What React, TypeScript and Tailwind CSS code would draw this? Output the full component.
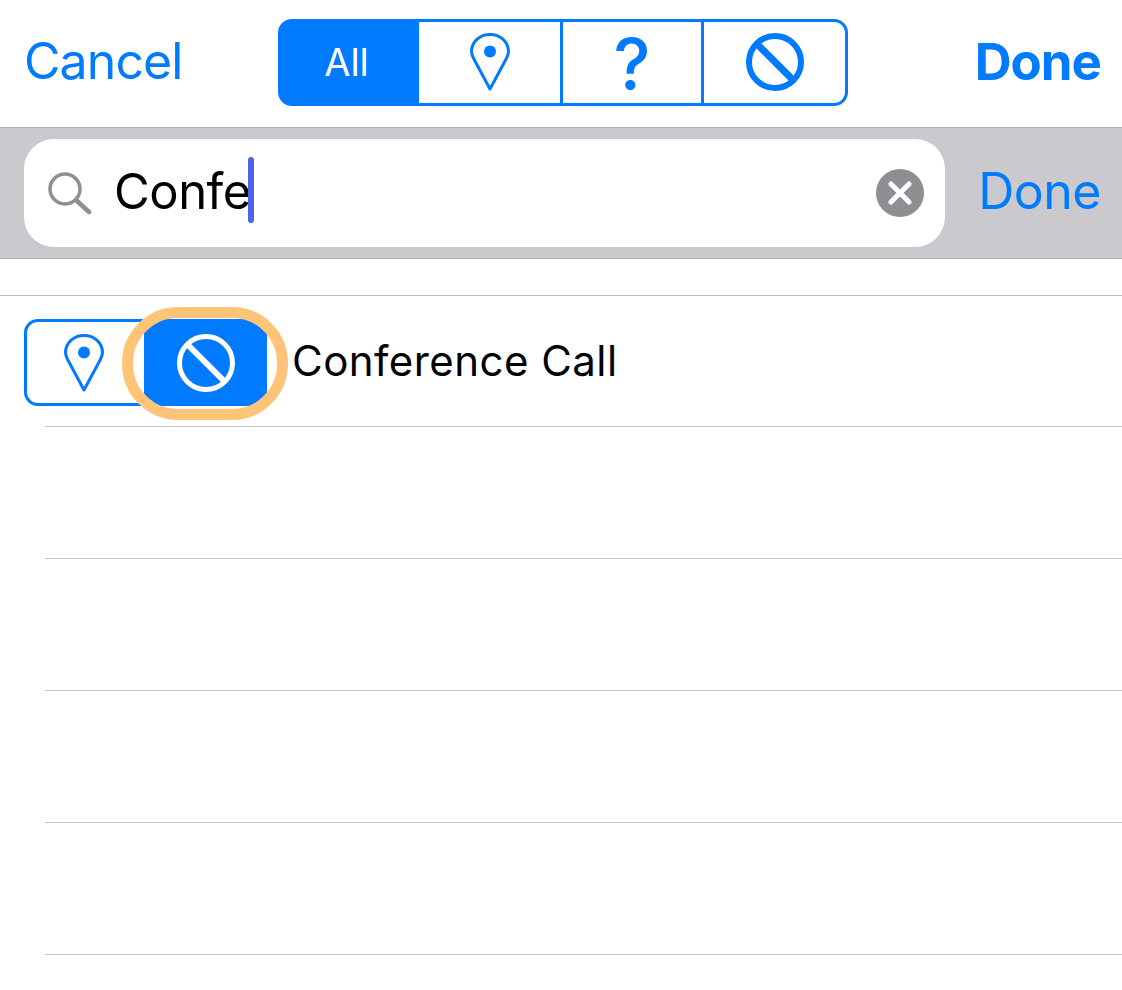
import type { ReactNode } from "react";

const font = { fontFamily: '"Inter", "Liberation Sans", sans-serif' };

function Pin({ className }: { className: string }) {
  return (
    <svg viewBox="0 0 40 58" className={className} fill="none">
      <path
        d="M20 56 L3.6 25.5 C2.4 23 1.5 20.5 1.5 18.5 C1.5 8.8 9.8 1.5 20 1.5 C30.2 1.5 38.5 8.8 38.5 18.5 C38.5 20.5 37.6 23 36.4 25.5 Z"
        stroke="#007aff"
        strokeWidth="3"
        strokeLinejoin="round"
      />
      <circle cx="20" cy="18.5" r="6" fill="#007aff" />
    </svg>
  );
}

function Ban({ color, width, className }: { color: string; width: number; className: string }) {
  return (
    <svg viewBox="0 0 60 60" className={className} fill="none">
      <circle cx="30" cy="30" r={28 - width / 2 + 1} stroke={color} strokeWidth={width} />
      <path d="M11 11 L49 49" stroke={color} strokeWidth={width + 1} />
    </svg>
  );
}

function Segment({ children, className }: { children: ReactNode; className: string }) {
  return <div className={`flex items-center justify-center h-full bg-white ${className}`}>{children}</div>;
}

export default function App() {
  return (
    <div className="w-[1122px] h-[990px] bg-white overflow-hidden" style={font}>
      {/* nav bar */}
      <div className="h-[127px] flex items-center pl-[24px] pr-[21px] pb-[2px]">
        <span className="w-[254px] text-[50px] leading-none text-[#007aff] tracking-[-0.9px] -mt-[3px]">Cancel</span>
        <div className="w-[570px] h-[87px] -mt-[1px] flex items-center border-[3px] border-[#007aff] bg-[#007aff] rounded-[14px] overflow-hidden">
          <div className="w-[138px] h-full flex items-center justify-center text-white text-[38px] font-normal pr-[7px]">
            All
          </div>
          <Segment className="w-[144px] border-r-[3px] border-[#007aff]">
            <Pin className="w-[40px] h-[58px]" />
          </Segment>
          <Segment className="w-[141px] border-r-[3px] border-[#007aff]">
            <span className="text-[#007aff] text-[70px] leading-[70px] font-medium mt-[4px]">?</span>
          </Segment>
          <Segment className="w-[141px]">
            <Ban color="#007aff" width={6} className="w-[60px] h-[60px]" />
          </Segment>
        </div>
        <span className="ml-auto text-[51px] leading-none font-bold text-[#007aff] tracking-[-1px] -mt-[3px]">Done</span>
      </div>

      {/* search bar */}
      <div className="h-[132px] bg-[#c9c9ce] border-y border-[#b2b2b6] flex items-center pl-[24px] pr-[21px]">
        <div className="w-[921px] h-[108px] bg-white rounded-[30px] flex items-center pl-[22px] pr-[21px]">
          <svg viewBox="0 0 46 44" className="w-[46px] h-[44px] shrink-0" fill="none">
            <circle cx="19" cy="18" r="15" stroke="#8e8e93" strokeWidth="3.5" />
            <path d="M30 29 L43 41" stroke="#8e8e93" strokeWidth="4.5" strokeLinecap="round" />
          </svg>
          <span className="ml-[22px] text-[49px] leading-none text-black tracking-[-0.5px] -mt-[3px]">Confe</span>
          <span className="w-[6px] h-[66px] -ml-[3px] -mt-[6px] rounded-full bg-[#4a64ea]" />
          <div className="ml-auto w-[48px] h-[48px] rounded-full bg-[#8e8e93] flex items-center justify-center">
            <svg viewBox="0 0 24 24" className="w-[24px] h-[24px]" fill="none">
              <path d="M3 3 L21 21 M21 3 L3 21" stroke="white" strokeWidth="5" strokeLinecap="round" />
            </svg>
          </div>
        </div>
        <span className="ml-auto text-[50px] leading-none text-[#007aff] tracking-[-0.5px] -mt-[5px]">Done</span>
      </div>

      <div className="h-[37px] border-b border-[#bdbdbd]" />

      {/* result row */}
      <div className="h-[130px] flex items-center pl-[24px] pt-[3px]">
        <div className="relative flex w-[243px] h-[87px]">
          <div className="w-[120px] h-full border-[3px] border-r-0 border-[#007aff] rounded-l-[14px] flex items-center justify-center pr-[4px]">
            <Pin className="w-[40px] h-[58px]" />
          </div>
          <div className="w-[123px] h-full bg-[#007aff] flex items-center justify-center">
            <Ban color="white" width={5} className="w-[60px] h-[60px]" />
          </div>
          <div className="absolute left-[98px] -top-[12px] w-[166px] h-[113px] rounded-[56px] border-[11px] border-[#ffc477]" />
        </div>
        <span className="ml-[25px] text-[42px] leading-none text-black tracking-[0.45px] -mt-[4px]">Conference Call</span>
      </div>

      {/* empty rows */}
      {[0, 1, 2, 3, 4].map((i) => (
        <div key={i} className={`${i === 0 ? "h-[1px]" : "h-[132px]"} ml-[45px] border-b border-[#c8c8c8]`} />
      ))}
    </div>
  );
}
